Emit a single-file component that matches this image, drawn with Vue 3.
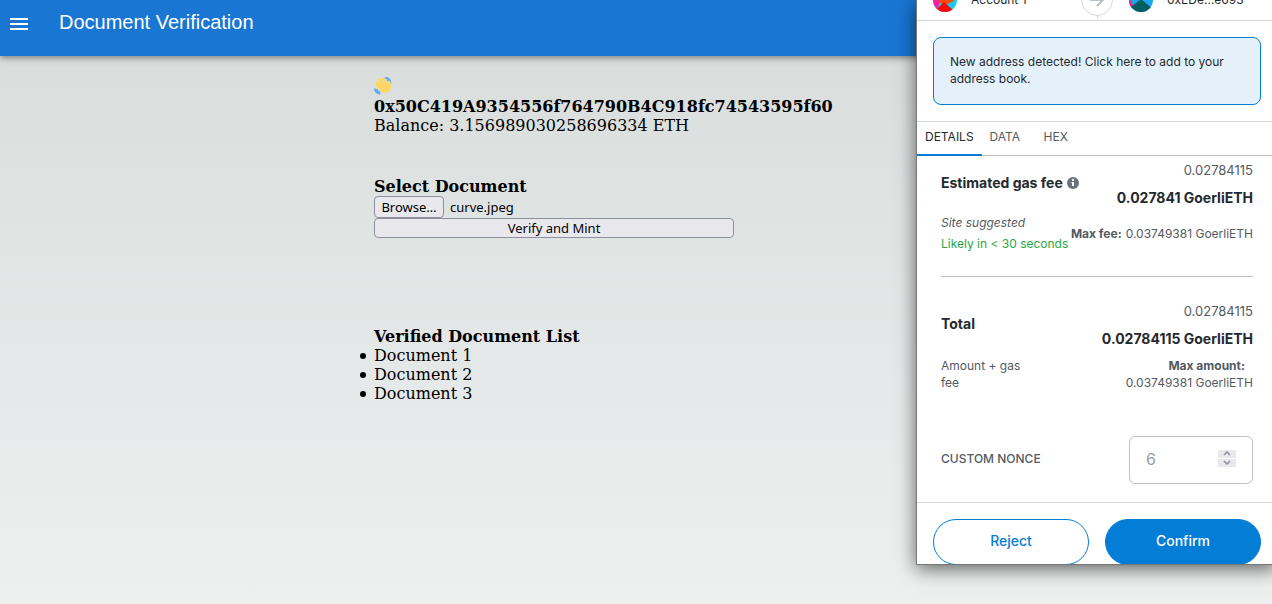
<script setup>
import { ref } from 'vue'

const documents = ['Document 1', 'Document 2', 'Document 3']
const tabs = ['Details', 'Data', 'Hex']
const activeTab = ref('Details')
const fileName = ref('curve.jpeg')
const nonce = ref('')
const fileInput = ref(null)

function pickFile(event) {
  const file = event.target.files[0]
  if (file) fileName.value = file.name
}

function stepNonce(amount) {
  nonce.value = Number(nonce.value || 6) + amount
}
</script>

<template>
  <div class="page">
    <header class="app-bar">
      <button class="menu-button" type="button" aria-label="Menu">
        <svg viewBox="0 0 24 24" width="24" height="24" fill="currentColor">
          <path d="M3 18h18v-2H3v2zm0-5h18v-2H3v2zm0-7v2h18V6H3z" />
        </svg>
      </button>
      <h1>Document Verification</h1>
    </header>

    <main class="content">
      <section class="wallet">
        <svg class="wave" viewBox="0 0 36 36" width="18" height="18" aria-label="Waving hand">
          <path d="M23 2c5-1 10 4 10 9M27 6c2 1 3 3 3 5" fill="none" stroke="#5da9ec" stroke-width="3.5" stroke-linecap="round" />
          <path d="M2 24c0 5 4 9 9 9M6 25c0 3 2 5 5 5" fill="none" stroke="#5da9ec" stroke-width="3.5" stroke-linecap="round" />
          <path d="M4.5 9.5c1.300-1.300 3-1 4 .2l6.500 7.800.8-.7L8.200 7c-1-1.500-.8-3 .4-4s2.800-.7 3.800.6l8 10.200.9-.6-5.500-8c-.8-1.400-.6-2.700.5-3.500 1.200-.8 2.600-.4 3.500.9l7.500 11.200c.2-3.200.8-5.800 2.800-6.600 1.600-.6 2.900.6 2.800 2.200-.2 3 1.200 6.500.7 11.600-.5 5-4.300 9.500-9.600 10.400-5.500 1-9.600-1.400-12.600-5.200L3.600 16.700c-1-1.300-.9-2.800.3-3.700 1-.8 2.100-.7 3.100.2L4.400 13c-1-1.200-.9-2.500.1-3.500z" fill="#ffd75e" />
          <path d="M9 11l6 7M13 8l7 9M5.500 14l7 8" fill="none" stroke="#f2c149" stroke-width="1" />
        </svg>
        <strong>0x50C419A9354556f764790B4C918fc74543595f60</strong>
        <span>Balance: 3.156989030258696334 ETH</span>
      </section>

      <section class="select-document">
        <h2>Select Document</h2>
        <div class="file-row">
          <button class="native-button browse" type="button" @click="fileInput.click()">Browse…</button>
          <span>{{ fileName }}</span>
          <input ref="fileInput" type="file" aria-label="Select Document" hidden @change="pickFile" />
        </div>
        <button class="native-button mint" type="button">Verify and Mint</button>
      </section>

      <section>
        <h2>Verified Document List</h2>
        <ul>
          <li v-for="item in documents" :key="item">{{ item }}</li>
        </ul>
      </section>
    </main>

    <aside class="wallet-popup" aria-label="Transaction confirmation">
      <div class="accounts">
        <div class="accounts-inner">
          <div class="account">
            <svg viewBox="0 0 24 24" width="24" height="24">
              <clipPath id="sender"><circle cx="12" cy="12" r="12" /></clipPath>
              <g clip-path="url(#sender)">
                <path d="M0 0h24v24H0z" fill="#18cdf2" />
                <path d="M0 7l7 6-3 11H0z" fill="#fb1fa0" />
                <path d="M5 8h13l3 5-9 4-5-2z" fill="#fb4b05" />
                <path d="M3 22l8-8 9 8v2H3z" fill="#fb0606" />
              </g>
            </svg>
            <span>Account 1</span>
          </div>
          <div class="arrow">
            <svg viewBox="0 0 20 20" width="20" height="20" fill="none" stroke="#bbc0c5" stroke-width="2">
              <path d="M3 10h13M10 4l6 6-6 6" />
            </svg>
          </div>
          <div class="account recipient">
            <svg viewBox="0 0 24 24" width="24" height="24">
              <clipPath id="recipient"><circle cx="12" cy="12" r="12" /></clipPath>
              <g clip-path="url(#recipient)">
                <path d="M0 0h24v24H0z" fill="#1aa7ee" />
                <path d="M0 10l5 9-5 3z" fill="#f21c78" />
                <path d="M12 11l12 10v3H2v-5z" fill="#035e60" />
              </g>
            </svg>
            <span>0xEDe...e693</span>
          </div>
        </div>
      </div>

      <button class="notice" type="button">New address detected! Click here to add to your address book.</button>

      <nav class="tabs">
        <button
          v-for="tab in tabs"
          :key="tab"
          type="button"
          :class="{ active: tab === activeTab }"
          @click="activeTab = tab"
        >{{ tab }}</button>
      </nav>

      <div class="fees">
        <section class="fee">
          <div class="fee-main">
            <h3>
              Estimated gas fee
              <svg viewBox="0 0 12 12" width="12" height="12" aria-label="Information">
                <circle cx="6" cy="6" r="6" fill="#6a737d" />
                <path d="M5 2h2v2H5zM4.500 5H7v4H5V6h-.5z" fill="#fff" />
              </svg>
            </h3>
            <div class="amounts">
              <span>0.02784115</span>
              <strong>0.027841 GoerliETH</strong>
            </div>
          </div>
          <div class="fee-detail gas-detail">
            <div>
              <em>Site suggested</em>
              <span class="likely">Likely in &lt; 30 seconds</span>
            </div>
            <div class="max-fee"><strong>Max fee:</strong><span>0.03749381 GoerliETH</span></div>
          </div>
        </section>

        <section class="fee total">
          <div class="fee-main">
            <h3>Total</h3>
            <div class="amounts">
              <span>0.02784115</span>
              <strong>0.02784115 GoerliETH</strong>
            </div>
          </div>
          <div class="fee-detail">
            <span class="total-label">Amount + gas fee</span>
            <div class="max-amount"><strong>Max amount:</strong><span>0.03749381 GoerliETH</span></div>
          </div>
        </section>

        <div class="nonce">
          <label for="nonce">Custom nonce</label>
          <div class="nonce-field">
            <input id="nonce" v-model="nonce" type="number" placeholder="6" />
            <div class="spinner">
              <button type="button" aria-label="Increase nonce" @click="stepNonce(1)">
                <svg viewBox="0 0 8 5" width="8" height="5"><path d="M1 4l3-3 3 3" /></svg>
              </button>
              <button type="button" aria-label="Decrease nonce" @click="stepNonce(-1)">
                <svg viewBox="0 0 8 5" width="8" height="5"><path d="M1 1l3 3 3-3" /></svg>
              </button>
            </div>
          </div>
        </div>
      </div>

      <footer class="actions">
        <button class="reject" type="button">Reject</button>
        <button class="confirm" type="button">Confirm</button>
      </footer>
    </aside>
  </div>
</template>

<style>
body {
  overflow-x: hidden;
}
</style>

<style scoped>
* {
  box-sizing: border-box;
}

button {
  margin: 0;
  font-family: inherit;
  cursor: pointer;
}

svg {
  display: block;
  flex: none;
}

.page {
  position: relative;
  min-height: 100vh;
  overflow: hidden;
  background: linear-gradient(#d7dcdb, #eef0f0);
  color: #000;
  font: 16px/19px "DejaVu Serif", serif;
}

.app-bar {
  display: flex;
  align-items: flex-start;
  gap: 16px;
  height: 56px;
  background: #1976d2;
  color: #fff;
  box-shadow: 0 2px 4px -1px rgba(0, 0, 0, 0.2), 0 4px 5px rgba(0, 0, 0, 0.14), 0 1px 10px rgba(0, 0, 0, 0.12);
}

.menu-button {
  padding: 12px 12px 12px 7px;
  border: 0;
  background: none;
  color: inherit;
}

.app-bar h1 {
  margin: 0;
  padding-top: 6px;
  font: 400 20px/32px "Liberation Sans", Arial, sans-serif;
}

.content {
  display: flex;
  flex-direction: column;
  width: 524px;
  max-width: 100%;
  margin: 0 auto;
  padding-top: 21px;
}

.wallet {
  display: flex;
  flex-direction: column;
}

.wave {
  margin-bottom: 2px;
}

h2 {
  margin: 0;
  font-size: 16px;
  line-height: 19px;
}

.select-document {
  margin: 42px 0 89px;
}

.file-row {
  display: flex;
  align-items: center;
  gap: 6px;
}

.file-row,
.native-button {
  font: 13px/18px "Noto Sans", sans-serif;
}

.native-button {
  display: block;
  padding: 0 5px;
  border: 1px solid #8f8f9d;
  border-radius: 4px;
  background: #e9e9ed;
  color: #000;
}

.browse {
  width: 70px;
  height: 22px;
}

.mint {
  width: 360px;
}

ul {
  margin: 0;
  padding: 0;
  list-style: none;
}

li::before {
  content: "";
  display: inline-block;
  width: 6px;
  height: 6px;
  margin: 0 8px 0 -14px;
  border-radius: 50%;
  background: currentColor;
  vertical-align: 2px;
}

.wallet-popup {
  position: absolute;
  top: 0;
  right: -5px;
  width: 361px;
  overflow: hidden;
  border: solid #777;
  border-width: 0 0 1px 1px;
  background: #fff;
  color: #24292e;
  box-shadow: 0 4px 18px rgba(0, 0, 0, 0.6);
  font: 12px/17px Inter, sans-serif;
}

.accounts {
  display: flex;
  align-items: flex-end;
  height: 21px;
  overflow: hidden;
  border-bottom: 1px solid #d6d9dc;
}

.accounts-inner {
  display: grid;
  grid-template-columns: 1fr 32px 1fr;
  align-items: center;
  flex: 1;
  height: 40px;
}

.account {
  display: flex;
  align-items: center;
  gap: 14px;
  padding-left: 16px;
}

.account span {
  padding-bottom: 2px;
}

.arrow {
  position: relative;
  display: grid;
  place-items: center;
  height: 32px;
  border: 1px solid #d6d9dc;
  border-radius: 50%;
}

.arrow::after {
  content: "";
  position: absolute;
  top: 100%;
  left: 50%;
  height: 4px;
  border-left: 1px solid #d6d9dc;
}

.notice {
  display: block;
  width: calc(100% - 32px);
  margin: 16px;
  padding: 15px 16px 17px;
  border: 1px solid #037dd6;
  border-radius: 8px;
  background: #e5f1fa;
  color: #24292e;
  font: inherit;
  text-align: left;
}

.tabs {
  display: flex;
  border-top: 1px solid #d6d9dc;
  border-bottom: 1px solid #bbc0c5;
}

.tabs button {
  min-width: 54px;
  height: 34px;
  margin-bottom: -1px;
  padding: 0 8px 3px;
  border: 0;
  border-bottom: 2px solid transparent;
  background: none;
  color: #535a61;
  font: inherit;
  text-align: left;
  text-transform: uppercase;
}

.tabs .active {
  border-color: #037dd6;
  color: #24292e;
}

.fees {
  padding: 0 24px 18px;
}

.fee-main,
.fee-detail,
.nonce {
  display: flex;
  justify-content: space-between;
}

.fee-main {
  align-items: center;
  font-size: 14px;
  line-height: 28px;
}

h3 {
  display: flex;
  align-items: center;
  gap: 4px;
  margin: 0;
  padding-bottom: 2px;
  font-size: 14px;
  font-weight: 700;
}

.amounts,
.max-amount {
  display: flex;
  flex-direction: column;
  align-items: flex-end;
}

.amounts span {
  font-size: 13px;
}

.amounts span,
.fee-detail {
  color: #535a61;
}

.gas-detail {
  padding-bottom: 22px;
  border-bottom: 1px solid #bbc0c5;
  line-height: 21px;
  white-space: nowrap;
}

.gas-detail em,
.gas-detail .likely {
  display: block;
}

.gas-detail .likely {
  color: #28a745;
}

.max-fee {
  display: flex;
  align-items: center;
  gap: 4px;
}

.total {
  padding-top: 20px;
}

.total .fee-detail {
  padding-top: 4px;
}

.total-label {
  width: 90px;
}

.max-amount strong {
  padding-right: 8px;
}

.nonce {
  align-items: center;
  margin-top: 45px;
}

.nonce label {
  padding-bottom: 4px;
  color: #535a61;
  font-weight: 500;
  text-transform: uppercase;
}

.nonce-field {
  display: flex;
  align-items: center;
  width: 124px;
  height: 48px;
  padding: 0 16px 2px;
  border: 1px solid #bbc0c5;
  border-radius: 6px;
}

.nonce-field input {
  flex: 1;
  min-width: 0;
  padding: 0;
  border: 0;
  outline: 0;
  background: none;
  color: #24292e;
  font: 16px/20px Inter, sans-serif;
  appearance: textfield;
}

.nonce-field input::placeholder {
  color: #9a9da1;
}

.spinner {
  display: grid;
  gap: 1px;
  padding-bottom: 2px;
}

.spinner button {
  display: grid;
  place-items: center;
  width: 18px;
  height: 8px;
  padding: 0;
  border: 0;
  background: #e9e9ed;
}

.spinner path {
  fill: none;
  stroke: #8f8f9d;
  stroke-width: 1.5;
}

.actions {
  display: grid;
  grid-template-columns: 1fr 1fr;
  gap: 16px;
  height: 62px;
  padding: 16px 16px 0;
  border-top: 1px solid #d6d9dc;
}

.actions button {
  height: 46px;
  padding: 0 0 4px;
  border: 1px solid #037dd6;
  border-radius: 23px;
  background: #fff;
  color: #037dd6;
  font-size: 14px;
  font-weight: 500;
}

.actions .confirm {
  background: #037dd6;
  color: #fff;
}
</style>
